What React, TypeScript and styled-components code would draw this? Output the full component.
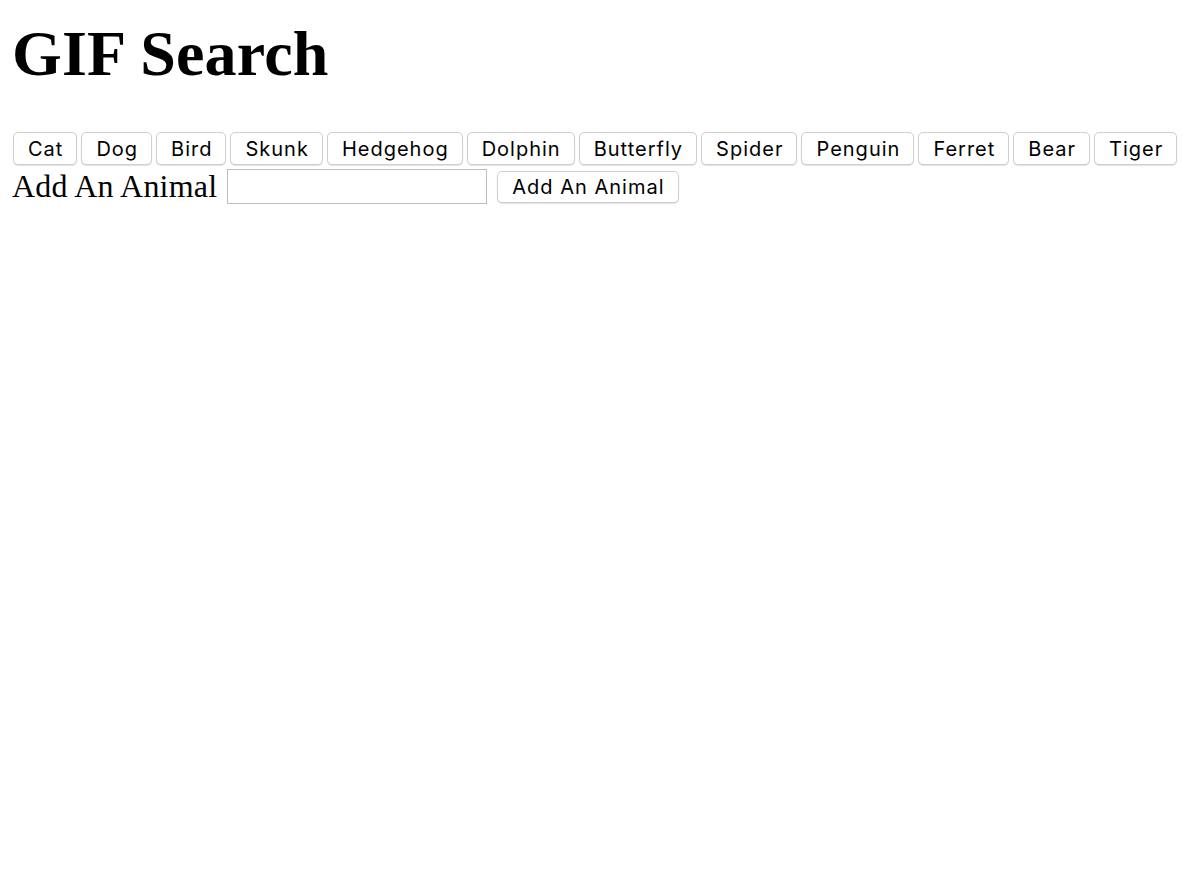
import React from "react";
import styled, { createGlobalStyle } from "styled-components";

const GlobalStyle = createGlobalStyle`
  html, body { margin: 0; padding: 0; background: #ffffff; }
  body { font-family: "Liberation Serif", "Times New Roman", serif; color: #000; }
`;

const Page = styled.div`
  padding: 0 12px;
`;

const Title = styled.h1`
  margin: 0;
  padding-top: 17px;
  font-family: "Liberation Serif", "Times New Roman", serif;
  font-weight: 700;
  font-size: 64px;
  line-height: 74px;
  letter-spacing: 0.2px;
`;

const ButtonRow = styled.div`
  display: flex;
  flex-wrap: wrap;
  gap: 4px;
  margin-top: 41px;
  padding-left: 1px;
`;

const PillButton = styled.button`
  box-sizing: border-box;
  height: 33px;
  padding: 0 13px 0 14px;
  font-family: Inter, "Liberation Sans", sans-serif;
  font-size: 20px;
  letter-spacing: 1px;
  color: #000;
  background: #fff;
  border: 1px solid #cfcfcf;
  border-radius: 5px;
  box-shadow: 0 1px 1px rgba(0, 0, 0, 0.12);
  cursor: pointer;
`;

const FormRow = styled.form`
  display: flex;
  align-items: center;
  gap: 10px;
  margin-top: 1px;
  height: 40px;
`;

const Label = styled.label`
  font-family: "Liberation Serif", "Times New Roman", serif;
  font-size: 32px;
  line-height: 37px;
  letter-spacing: 0.2px;
`;

const TextInput = styled.input`
  box-sizing: border-box;
  width: 260px;
  height: 35px;
  border: 1px solid #bdbdbd;
  margin: 1px 0 0;
  padding: 2px 4px;
  font-size: 20px;
`;

const SubmitButton = styled(PillButton)`
  height: 32px;
  margin-top: 2px;
`;

const animals = [
  "Cat",
  "Dog",
  "Bird",
  "Skunk",
  "Hedgehog",
  "Dolphin",
  "Butterfly",
  "Spider",
  "Penguin",
  "Ferret",
  "Bear",
  "Tiger",
];

export default function App() {
  return (
    <Page>
      <GlobalStyle />
      <Title>GIF Search</Title>
      <ButtonRow>
        {animals.map((a) => (
          <PillButton key={a} type="button">
            {a}
          </PillButton>
        ))}
      </ButtonRow>
      <FormRow onSubmit={(e) => e.preventDefault()}>
        <Label htmlFor="animal-input">Add An Animal</Label>
        <TextInput id="animal-input" type="text" />
        <SubmitButton type="submit">Add An Animal</SubmitButton>
      </FormRow>
    </Page>
  );
}
